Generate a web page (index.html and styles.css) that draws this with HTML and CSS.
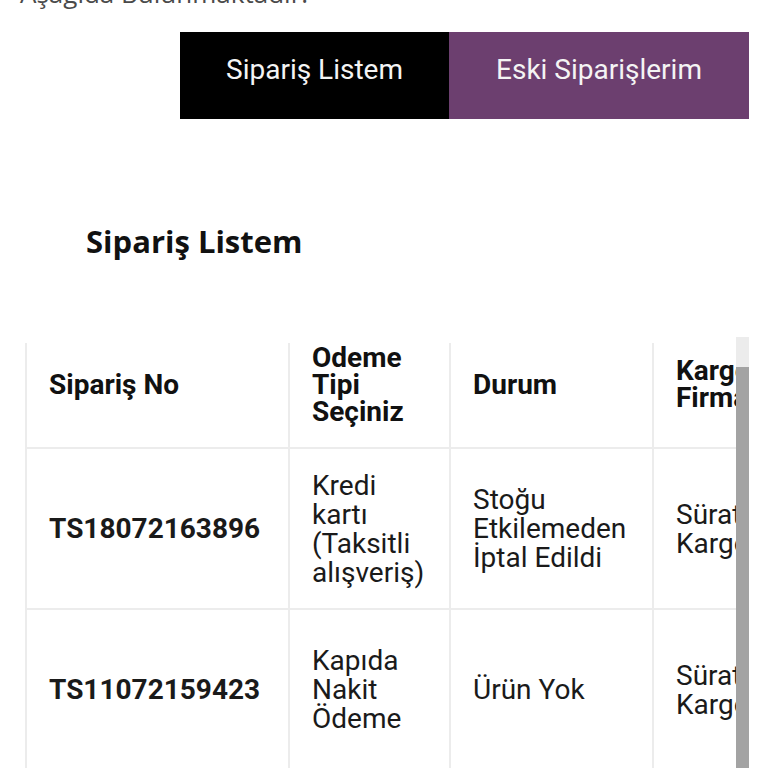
FILE: index.html
```html
<!DOCTYPE html>
<html lang="tr">
<head>
<meta charset="utf-8">
<title>Sipariş Listem</title>
<link rel="stylesheet" href="styles.css">
</head>
<body>
<div class="intro">Aşağıda Bulunmaktadır.</div>
<div class="tabs">
  <a class="tab tab-active">Sipariş Listem</a>
  <a class="tab tab-old">Eski Siparişlerim</a>
</div>
<h2 class="title">Sipariş Listem</h2>
<div class="table-area">
  <div class="viewport">
    <table class="orders">
      <colgroup>
        <col class="c1"><col class="c2"><col class="c3"><col class="c4">
      </colgroup>
      <tr class="head">
        <th>Sipariş No</th>
        <th>Odeme Tipi Seçiniz</th>
        <th>Durum</th>
        <th>Kargo Firması</th>
      </tr>
      <tr class="row1">
        <td class="no">TS18072163896</td>
        <td>Kredi kartı (Taksitli alışveriş)</td>
        <td>Stoğu Etkilemeden İptal Edildi</td>
        <td>Sürat Kargo</td>
      </tr>
      <tr class="row2">
        <td class="no">TS11072159423</td>
        <td>Kapıda Nakit Ödeme</td>
        <td>Ürün Yok</td>
        <td>Sürat Kargo</td>
      </tr>
    </table>
  </div>
  <div class="scrollbar"><div class="thumb"></div></div>
</div>
</body>
</html>
```
FILE: styles.css
```css
html, body {
  margin: 0;
  padding: 0;
  background: #ffffff;
  overflow: hidden;
}
body {
  font-family: Roboto, "Noto Sans", sans-serif;
  color: #111;
}
.intro {
  margin-top: -22px;
  padding-left: 20px;
  font-family: "Open Sans", sans-serif;
  font-size: 26px;
  line-height: 30px;
  color: #4a4a4a;
  height: 30px;
}
.tabs {
  display: flex;
  justify-content: flex-end;
  padding-right: 19px;
  margin-top: 24px;
}
.tab {
  display: flex;
  align-items: center;
  justify-content: center;
  box-sizing: border-box;
  height: 87px;
  padding-bottom: 13px;
  color: #f4f4f4;
  font-family: Roboto, sans-serif;
  font-size: 28px;
}
.tab-active {
  width: 269px;
  background: #000000;
}
.tab-old {
  width: 300px;
  background: #6c3f6f;
}
.title {
  margin: 102px 0 0 86px;
  font-family: "Open Sans", sans-serif;
  font-weight: 700;
  font-size: 31px;
  line-height: 40px;
  color: #111;
}
.table-area {
  display: flex;
  margin: 76px 0 0 25px;
  width: 724px;
  height: 500px;
}
.viewport {
  width: 711px;
  overflow: hidden;
  padding-top: 6px;
}
.orders {
  border-collapse: collapse;
  table-layout: fixed;
  width: 757px;
}
.c1 { width: 263px; }
.c2 { width: 161px; }
.c3 { width: 203px; }
.c4 { width: 130px; }
.orders th, .orders td {
  border: 2px solid #ececec;
  padding: 0 16px 0 22px;
  text-align: left;
  vertical-align: middle;
  line-height: 29px;
}
.orders tr:first-child th { border-top: none; }
.orders th {
  font-weight: 700;
  font-size: 28px;
  line-height: 27px;
  color: #111;
  padding-bottom: 22px;
}
.orders td {
  font-size: 28px;
  color: #1a1a1a;
}
.orders td.no {
  font-weight: 700;
  font-size: 28px;
}
.head { height: 105px; }
.row1 { height: 161px; }
.row2 { height: 161px; }
.scrollbar {
  width: 13px;
  background: #ececec;
  display: flex;
  flex-direction: column;
}
.thumb {
  margin-top: 30px;
  flex: 1;
  background: #a3a3a3;
}
```
